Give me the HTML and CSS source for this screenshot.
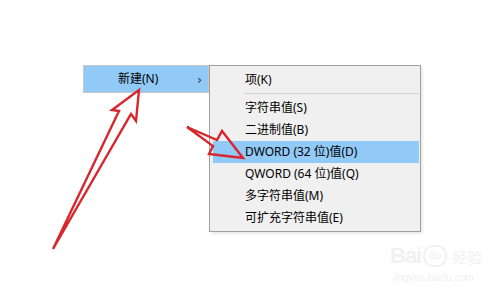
FILE: index.html
```html
<!DOCTYPE html>
<html>
<head>
<meta charset="utf-8">
<link rel="stylesheet" href="styles.css">
</head>
<body>
<div class="stage">
  <div class="menus">
    <div class="main-menu">
      <div class="main-item">
        <span class="main-label">新建(N)</span>
        <span class="chev">&#x203A;</span>
      </div>
    </div>
    <div class="submenu">
      <div class="item">项(K)</div>
      <div class="sep"></div>
      <div class="item">字符串值(S)</div>
      <div class="item">二进制值(B)</div>
      <div class="item active">DWORD (32 位)值(D)</div>
      <div class="item">QWORD (64 位)值(Q)</div>
      <div class="item">多字符串值(M)</div>
      <div class="item">可扩充字符串值(E)</div>
    </div>
  </div>
  <div class="watermark">
    <div class="wm-top"><span class="wm-bai">Bai</span><span class="wm-du">du</span><span class="wm-jy">经验</span></div>
    <div class="wm-url">jingyan.baidu.com</div>
  </div>
  <svg class="arrows" width="504" height="292" viewBox="0 0 504 292">
    <polygon points="139,90 136,121 131,114 53,249 119,111 112,110" fill="none" stroke="#d8262d" stroke-width="2.4" stroke-linejoin="miter"/>
    <polygon points="187,127 217,140 222,131 243,158 209,154 213,146" fill="none" stroke="#d8262d" stroke-width="2.4" stroke-linejoin="miter"/>
  </svg>
</div>
</body>
</html>
```

FILE: styles.css
```css
html, body {
  margin: 0;
  padding: 0;
  background: #ffffff;
}
.stage {
  position: relative;
  width: 504px;
  height: 292px;
  overflow: hidden;
  font-family: "Noto Sans", "Noto Sans CJK SC", sans-serif;
  font-size: 12px;
  color: #000;
}
.menus {
  display: flex;
  align-items: flex-start;
  padding: 65px 0 0 83px;
}
.main-menu {
  width: 124px;
  height: 26px;
  border: 1px solid #c8c8c8;
  background: #f0f0f0;
}
.main-item {
  height: 26px;
  background: #91c9f7;
  display: flex;
  align-items: center;
  padding-left: 34px;
  box-sizing: border-box;
}
.main-label {
  flex: 1;
  line-height: 26px;
}
.chev {
  width: 8px;
  margin-right: 3px;
  font-size: 13px;
  color: #333;
  font-family: "DejaVu Sans", sans-serif;
}
.submenu {
  width: 210px;
  border: 1px solid #a0a0a0;
  background: #f0f0f0;
  padding: 3px 0 2px;
  box-shadow: 2px 2px 2px rgba(0,0,0,0.08);
}
.item {
  height: 22px;
  line-height: 22px;
  padding-left: 32px;
  margin: 0 1px 0 3px;
  white-space: nowrap;
}
.item.active {
  background: #91c9f7;
}
.sep {
  height: 1px;
  background: #d0d0d0;
  margin: 2px 1px 3px 34px;
}
.watermark {
  position: absolute;
  left: 390px;
  top: 244px;
  color: #f1f1f1;
  font-family: "Liberation Sans", sans-serif;
}
.wm-top {
  display: flex;
  align-items: center;
  height: 24px;
}
.wm-bai {
  font-size: 22px;
  font-weight: bold;
  letter-spacing: -1px;
}
.wm-du {
  display: inline-block;
  width: 20px;
  height: 18px;
  border: 2px solid #f1f1f1;
  border-radius: 10px;
  font-size: 11px;
  text-align: center;
  line-height: 17px;
  margin-left: 2px;
}
.wm-jy {
  font-family: "Noto Sans CJK SC", sans-serif;
  font-size: 15px;
  margin-left: 5px;
}
.wm-url {
  font-size: 10px;
  margin-top: 4px;
  padding-left: 3px;
}
.arrows {
  position: absolute;
  left: 0;
  top: 0;
}
```
